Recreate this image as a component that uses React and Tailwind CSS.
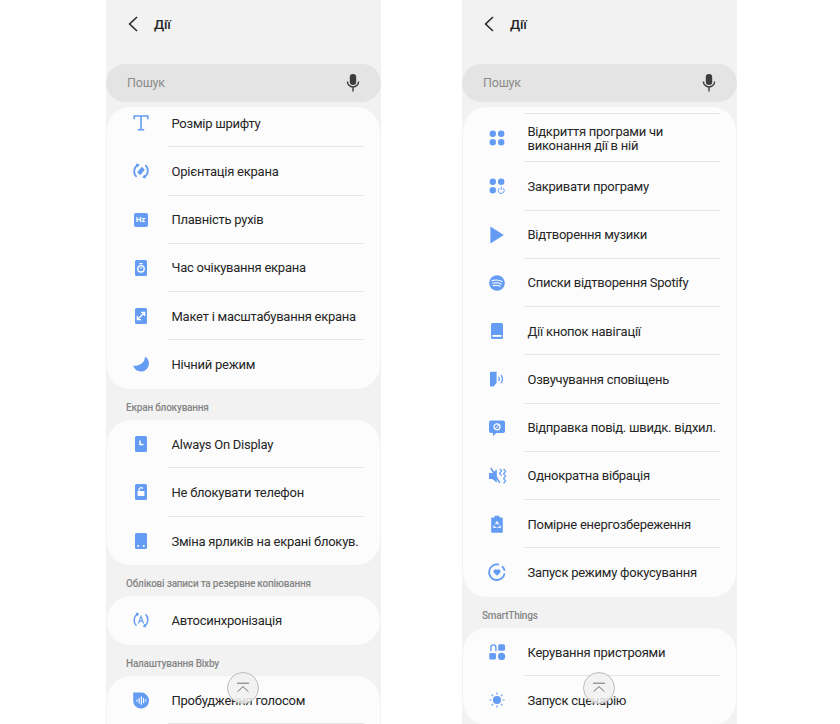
import React from 'react';

const BLUE = '#649cf3';

const Svg = ({ children }) => (
    <svg width="20" height="20" viewBox="0 0 20 20" fill="none">{children}</svg>
);

// Settings icons, drawn on a 20x20 box
const icons = {
    font: (
        <Svg>
            <path d="M3.2 6.2V3h13.6v3.2M10 3v13.8M6.8 16.8h6.4" stroke={BLUE} strokeWidth="1.6" />
        </Svg>
    ),
    rotate: (
        <Svg>
            <path d="M6.4 4.2A7.4 7.4 0 0 0 5.6 15.8M13.6 15.8A7.4 7.4 0 0 0 14.4 4.2" stroke={BLUE} strokeWidth="1.8" />
            <path d="M4.8 2.6l3.8.6-1.8 3.2zM15.2 17.4l-3.8-.6 1.8-3.2z" fill={BLUE} />
            <path d="M10.8 5.8l3 3-4.6 5.4-3-3z" fill={BLUE} />
        </Svg>
    ),
    hz: (
        <div className="w-[14px] h-[14px] rounded-[2px] bg-[#649cf3] flex items-center justify-center text-white text-[8px] font-bold leading-none">Hz</div>
    ),
    timer: (
        <Svg>
            <rect x="4" y="2" width="12" height="16" rx="1.5" fill={BLUE} />
            <circle cx="10" cy="10.8" r="3.2" stroke="#fff" strokeWidth="1.4" />
            <path d="M8.4 5.6h3.2M10 9v2" stroke="#fff" strokeWidth="1.2" />
        </Svg>
    ),
    resize: (
        <Svg>
            <rect x="4" y="2" width="12" height="16" rx="1.5" fill={BLUE} />
            <path d="M7 13l6-6M10 6.4h3.6V10M10 13.6H6.4V10" stroke="#fff" strokeWidth="1.4" />
        </Svg>
    ),
    moon: (
        <Svg>
            <path d="M14 2.6A8 8 0 1 1 2.2 11.5C7 13 14 9.5 14 2.6z" fill={BLUE} />
        </Svg>
    ),
    clock: (
        <Svg>
            <rect x="4" y="2" width="12" height="16" rx="1.5" fill={BLUE} />
            <path d="M9 6.5v4h3.5" stroke="#fff" strokeWidth="1.5" />
        </Svg>
    ),
    lock: (
        <Svg>
            <rect x="4" y="2" width="12" height="16" rx="1.5" fill={BLUE} />
            <rect x="6.6" y="9" width="6.8" height="5" rx="0.6" fill="#fff" />
            <path d="M8 9V7.6a2 2 0 0 1 3.8-.8" stroke="#fff" strokeWidth="1.2" />
        </Svg>
    ),
    shortcuts: (
        <Svg>
            <rect x="4" y="2" width="12" height="16" rx="1.5" fill={BLUE} />
            <circle cx="7.2" cy="15" r="1" fill="#fff" />
            <circle cx="12.8" cy="15" r="1" fill="#fff" />
        </Svg>
    ),
    autosync: (
        <Svg>
            <path d="M6.2 4.2A7.4 7.4 0 0 0 5.4 15.6M13.8 15.8A7.4 7.4 0 0 0 14.6 4.4" stroke={BLUE} strokeWidth="1.5" />
            <path d="M4.6 2.6l3.6.6-1.7 3zM15.4 17.4l-3.6-.6 1.7-3z" fill={BLUE} />
            <path d="M7.4 13.6L10 6.4l2.6 7.2M8.3 11.2h3.4" stroke={BLUE} strokeWidth="1.2" />
        </Svg>
    ),
    voice: (
        <Svg>
            <path d="M2.2 2.6H10a8 8 0 0 1 0 16A7.8 7.8 0 0 1 2.2 10.6z" fill={BLUE} />
            <path d="M6 9.4v2.4M8.2 7.8v5.6M10.4 6.4v8.4M12.6 8v5.2M14.8 9.6v2" stroke="#fff" strokeWidth="1.1" />
        </Svg>
    ),
    apps: (
        <Svg>
            <circle cx="5.8" cy="5.8" r="3.2" fill={BLUE} />
            <circle cx="14.2" cy="5.8" r="3.2" fill={BLUE} />
            <circle cx="5.8" cy="14.2" r="3.2" fill={BLUE} />
            <circle cx="14.2" cy="14.2" r="3.2" fill={BLUE} />
        </Svg>
    ),
    appsPower: (
        <Svg>
            <circle cx="5.8" cy="5.8" r="3.2" fill={BLUE} />
            <circle cx="14.2" cy="5.8" r="3.2" fill={BLUE} />
            <circle cx="5.8" cy="14.2" r="3.2" fill={BLUE} />
            <path d="M12.2 12.2a3 3 0 1 0 4 0M14.2 10.6v3.4" stroke={BLUE} strokeWidth="1" />
        </Svg>
    ),
    play: (
        <Svg>
            <path d="M3.4 1.6L16.8 10 3.4 18.4z" fill={BLUE} />
        </Svg>
    ),
    spotify: (
        <Svg>
            <circle cx="10" cy="10" r="7.8" fill={BLUE} />
            <path d="M5 7.6c3.4-1 7-.7 10 .9M5.6 10.2c3-.8 6-.5 8.6.8M6.2 12.6c2.4-.6 4.8-.4 7 .7" stroke="#fff" strokeWidth="1.1" strokeLinecap="round" />
        </Svg>
    ),
    nav: (
        <Svg>
            <rect x="4" y="2" width="12" height="16" rx="1.5" fill={BLUE} />
            <rect x="5.4" y="14" width="9.2" height="1.8" fill="#fff" />
        </Svg>
    ),
    speak: (
        <Svg>
            <path d="M3 3.8a1 1 0 0 1 1-1h5.6v11l-3 3.6H4a1 1 0 0 1-1-1z" fill={BLUE} />
            <path d="M11.6 8c.9 1.2.9 2.8 0 4M14 5.8c1.8 2.5 1.8 5.9 0 8.4" stroke={BLUE} strokeWidth="1.3" />
        </Svg>
    ),
    message: (
        <Svg>
            <path d="M4 2.6h12a2 2 0 0 1 2 2v8.4a2 2 0 0 1-2 2H9.4l-3.4 3.2V15H4a2 2 0 0 1-2-2V4.6a2 2 0 0 1 2-2z" fill={BLUE} />
            <circle cx="10" cy="8.8" r="3" stroke="#fff" strokeWidth="1.2" />
            <path d="M8 11l4-4.2" stroke="#fff" strokeWidth="1" />
        </Svg>
    ),
    vibrate: (
        <Svg>
            <path d="M2 7h3.2l4.6-3.6v13.2L5.2 13H2z" fill={BLUE} />
            <path d="M3 1.6l9.4 14.6" stroke="#fff" strokeWidth="1" />
            <path d="M3.8 2l9 14.8" stroke={BLUE} strokeWidth="1.5" />
            <path d="M12.6 2.8l2 2-2 2.4 2 2.4" stroke={BLUE} strokeWidth="1.2" />
            <path d="M16.6 3l2 2.4-2 2.4 2 2.4-2 2.4 2 2.4-2 2.4" stroke={BLUE} strokeWidth="1.2" />
        </Svg>
    ),
    battery: (
        <Svg>
            <path d="M7.6 1.8h4.8v1.6h2.4a1 1 0 0 1 1 1V18a.8.8 0 0 1-.8.8H5a.8.8 0 0 1-.8-.8V4.4a1 1 0 0 1 1-1h2.4z" fill={BLUE} />
            <path d="M10 7.4l1.5 2.4h-3zM7.4 11.2l-1 2.2h3M12.6 11.2l1 2.2h-3" stroke="#fff" strokeWidth="1" />
        </Svg>
    ),
    focus: (
        <Svg>
            <path d="M12 2.7A7.8 7.8 0 1 0 17.6 11.4" stroke={BLUE} strokeWidth="1.8" />
            <path d="M15 4.2a7.8 7.8 0 0 1 2.6 4.6" stroke={BLUE} strokeWidth="1.8" />
            <path d="M10 13.8L6.7 10.4a2.1 2.1 0 0 1 3.3-2.5 2.1 2.1 0 0 1 3.3 2.5z" fill={BLUE} />
        </Svg>
    ),
    devices: (
        <Svg>
            <path d="M3.2 9.2V5.4a3.2 3.2 0 0 1 6.4 0v3.8H8.2V5.4a1.8 1.8 0 0 0-3.6 0v3.8z" fill={BLUE} />
            <rect x="11.2" y="2.2" width="6.8" height="6.6" rx="1.6" fill={BLUE} />
            <rect x="2.2" y="11" width="6.8" height="6.6" rx="1.6" fill={BLUE} />
            <circle cx="14.6" cy="14.4" r="3.6" fill={BLUE} />
        </Svg>
    ),
    sun: (
        <Svg>
            <circle cx="10" cy="10" r="4" fill={BLUE} />
            <path d="M10 2.4v2M10 15.6v2M2.4 10h2M15.6 10h2M4.6 4.6L6 6M14 14l1.4 1.4M15.4 4.6L14 6M6 14l-1.4 1.4" stroke={BLUE} strokeWidth="1.2" />
        </Svg>
    ),
};

const leftPhone = [
    {
        offset: '-mt-[8px]',
        rows: [
            ['font', 'Розмір шрифту'],
            ['rotate', 'Орієнтація екрана'],
            ['hz', 'Плавність рухів'],
            ['timer', 'Час очікування екрана'],
            ['resize', 'Макет і масштабування екрана'],
            ['moon', 'Нічний режим'],
        ],
    },
    {
        label: 'Екран блокування',
        rows: [
            ['clock', 'Always On Display'],
            ['lock', 'Не блокувати телефон'],
            ['shortcuts', 'Зміна ярликів на екрані блокув.'],
        ],
    },
    {
        label: 'Облікові записи та резервне копіювання',
        rows: [['autosync', 'Автосинхронізація']],
    },
    {
        label: 'Налаштування Bixby',
        rows: [['voice', 'Пробудження голосом'], ['', '']],
    },
];

const rightPhone = [
    {
        topDivider: true,
        rows: [
            ['apps', 'Відкриття програми чи\nвиконання дії в ній'],
            ['appsPower', 'Закривати програму'],
            ['play', 'Відтворення музики'],
            ['spotify', 'Списки відтворення Spotify'],
            ['nav', 'Дії кнопок навігації'],
            ['speak', 'Озвучування сповіщень'],
            ['message', 'Відправка повід. швидк. відхил.'],
            ['vibrate', 'Однократна вібрація'],
            ['battery', 'Помірне енергозбереження'],
            ['focus', 'Запуск режиму фокусування'],
        ],
    },
    {
        label: 'SmartThings',
        rows: [
            ['devices', 'Керування пристроями'],
            ['sun', 'Запуск сценарію'],
        ],
    },
];

const Row = ({ icon, text, last }) => (
    <div className="flex h-[48.25px] shrink-0">
        <div className="w-[61px] pl-[6px] flex items-center justify-center shrink-0">{icons[icon]}</div>
        <div className={`flex-1 mr-[16px] pl-[3.5px] pt-[2px] flex items-center whitespace-pre-line text-[13px] tracking-[-0.25px] leading-[14px] text-[#252525] ${last ? '' : 'border-b border-[#e6e6e6]'}`}>
            {text}
        </div>
    </div>
);

const Phone = ({ sections }) => (
    <div className="relative w-[275px] h-[724px] bg-[#f2f2f2] overflow-hidden flex flex-col shrink-0">
        {/* Header */}
        <div className="h-[64px] shrink-0 flex items-start pt-[14px] pl-[20px]">
            <svg width="14" height="20" viewBox="0 0 14 20" fill="none">
                <path d="M11 3L3.6 10l7.4 7" stroke="#2a2a2a" strokeWidth="1.6" />
            </svg>
            <span className="ml-[14px] text-[13.5px] tracking-[-0.2px] leading-[20px] font-medium text-[#252525]">Дії</span>
        </div>

        {/* Search */}
        <div className="h-[38px] shrink-0 rounded-full bg-[#e4e4e4] flex items-center justify-between pl-[21px] pr-[21px]">
            <span className="pt-[1px] text-[12.5px] tracking-[-0.2px] text-[#8b8b8b]">Пошук</span>
            <svg width="14" height="20" viewBox="0 0 14 20" fill="none">
                <rect x="3.8" y="1" width="6.4" height="11" rx="3.2" fill="#3c3c3c" />
                <path d="M1.4 8.4a5.6 5.6 0 0 0 11.2 0M7 14v4.6" stroke="#3c3c3c" strokeWidth="1.4" />
            </svg>
        </div>

        {/* Sections */}
        <div className="mt-[5px] flex flex-col">
            {sections.map((section, i) => (
                <div key={i} className="shrink-0">
                    {section.label && (
                        <div className="h-[31.5px] pl-[20px] pb-[5px] flex items-end text-[10px] tracking-[-0.2px] leading-[14px] font-medium text-[#858585]">
                            {section.label}
                        </div>
                    )}
                    <div className="mx-[1px] rounded-[24px] bg-[#fcfcfc] overflow-hidden">
                        {section.topDivider && <div className="h-[7px] ml-[61px] mr-[16px] border-b border-[#e6e6e6]" />}
                        <div className={section.offset || ''}>
                            {section.rows.map(([icon, text], j) => (
                                <Row key={j} icon={icon} text={text} last={j === section.rows.length - 1} />
                            ))}
                        </div>
                    </div>
                </div>
            ))}
        </div>

        {/* Scroll to top button */}
        <div className="absolute left-[121px] top-[672px] w-[32px] h-[32px] rounded-full border border-[#bdbdbd] bg-[#f0f0f0]/85 flex items-center justify-center">
            <svg width="16" height="12" viewBox="0 0 16 12" fill="none">
                <path d="M2 1.2h12M2.6 9.6L8 4.6l5.4 5" stroke="#6e6e6e" strokeWidth="1" />
            </svg>
        </div>
    </div>
);

export default function App() {
    return (
        <div className="w-[840px] h-[724px] bg-white overflow-hidden flex pl-[106px] gap-[81px] font-['Roboto',sans-serif]">
            <Phone sections={leftPhone} />
            <Phone sections={rightPhone} />
        </div>
    );
}
